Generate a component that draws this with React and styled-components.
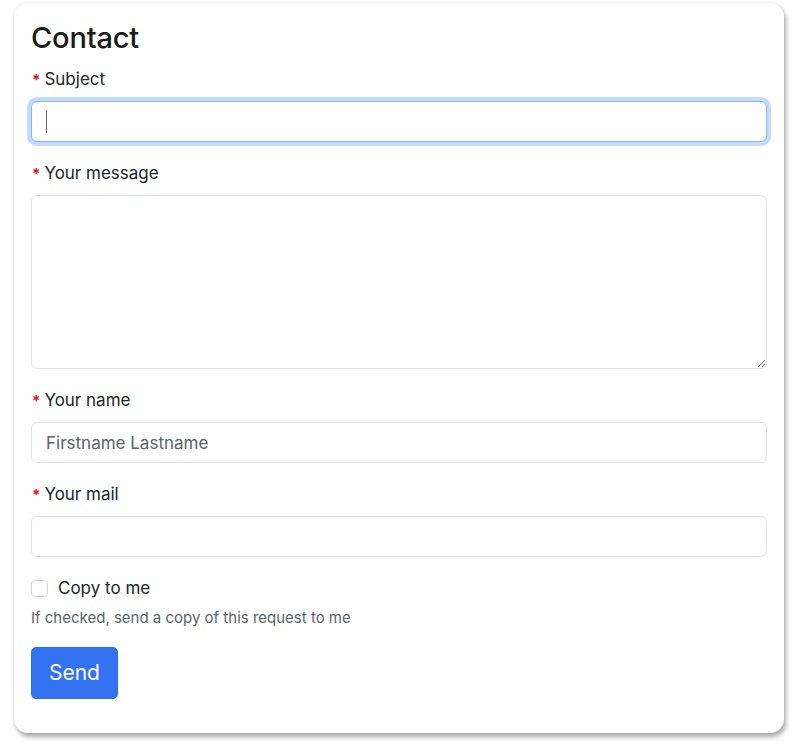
import React from "react";
import styled, { createGlobalStyle } from "styled-components";

const Global = createGlobalStyle`
  html, body { margin: 0; padding: 0; background: #fff; }
  body {
    font-family: Inter, "Helvetica Neue", "Liberation Sans", Arial, sans-serif;
    color: #212529;
    font-size: 17px;
    line-height: 26px;
  }
  * { box-sizing: border-box; }
`;

const Page = styled.div`
  padding: 3px 16px 17px 14px;
`;

const Card = styled.form`
  background: #fff;
  border-radius: 14px;
  padding: 17px 17px 19px 17px;
  box-shadow: 2px 4px 5px rgba(0, 0, 0, 0.33), 0 0 3px rgba(0, 0, 0, 0.08);
`;

const Title = styled.h3`
  margin: 0 0 10px;
  font-size: 29px;
  line-height: 36px;
  font-weight: 500;
  letter-spacing: -0.2px;
  color: #1a1a1a;
`;

const Group = styled.div`
  margin-bottom: 18px;
`;

const Label = styled.label`
  display: block;
  height: 26px;
  margin-bottom: 9px;
  font-size: 17px;
  line-height: 26px;
  color: #212529;
`;

const Star = styled.span`
  color: #e4101d;
  font-weight: 700;
  font-size: 15px;
  line-height: 0;
  margin-right: 4px;
  margin-left: 1px;
`;

const FieldWrap = styled.div`
  position: relative;
`;

const Input = styled.input`
  display: block;
  width: 100%;
  height: 41px;
  padding: 7px 14px;
  font: inherit;
  font-size: 17px;
  line-height: 25px;
  color: #212529;
  background: #fff;
  border: 1px solid ${(p) => (p.$focused ? "#86b7fe" : "#dee2e6")};
  border-radius: 6px;
  outline: none;
  box-shadow: ${(p) => (p.$focused ? "0 0 0 4px rgba(13, 110, 253, 0.25)" : "none")};
  &::placeholder { color: #5c636a; }
`;

const Caret = styled.span`
  position: absolute;
  left: 15px;
  top: 9px;
  width: 1px;
  height: 23px;
  background: #6b6b6b;
`;

const TextArea = styled.textarea`
  display: block;
  width: 100%;
  height: 174px;
  padding: 7px 14px;
  font: inherit;
  font-size: 17px;
  line-height: 25px;
  border: 1px solid #dee2e6;
  border-radius: 6px;
  outline: none;
  resize: vertical;
`;

const CheckRow = styled.div`
  display: flex;
  align-items: center;
  gap: 10px;
  height: 26px;
`;

const Box = styled.input.attrs({ type: "checkbox" })`
  appearance: none;
  -webkit-appearance: none;
  width: 17px;
  height: 17px;
  margin: 0;
  border: 1px solid #d0d4d8;
  border-radius: 4px;
  background: #fff;
  flex: none;
`;

const CheckLabel = styled.label`
  font-size: 17px;
  line-height: 26px;
`;

const Help = styled.div`
  margin-top: 6px;
  font-size: 15px;
  line-height: 22px;
  color: #5c636a;
`;

const Button = styled.button`
  display: inline-block;
  height: 52px;
  padding: 0 17px;
  font: inherit;
  font-size: 21px;
  line-height: 32px;
  color: #fff;
  background: #3373f2;
  border: 1px solid #2f6eea;
  border-radius: 5px;
  cursor: pointer;
`;

const ButtonRow = styled.div`
  margin-bottom: 15px;
`;

const Required = ({ children, htmlFor }) => (
  <Label htmlFor={htmlFor}>
    <Star>*</Star>
    {children}
  </Label>
);

export default function App() {
  return (
    <>
      <Global />
      <Page>
        <Card onSubmit={(e) => e.preventDefault()}>
          <Title>Contact</Title>
          <Group>
            <Required htmlFor="subject">Subject</Required>
            <FieldWrap>
              <Input id="subject" $focused />
              <Caret />
            </FieldWrap>
          </Group>
          <Group>
            <Required htmlFor="message">Your message</Required>
            <TextArea id="message" />
          </Group>
          <Group>
            <Required htmlFor="name">Your name</Required>
            <Input id="name" placeholder="Firstname Lastname" />
          </Group>
          <Group>
            <Required htmlFor="mail">Your mail</Required>
            <Input id="mail" type="email" />
          </Group>
          <Group>
            <CheckRow>
              <Box id="copy" />
              <CheckLabel htmlFor="copy">Copy to me</CheckLabel>
            </CheckRow>
            <Help>If checked, send a copy of this request to me</Help>
          </Group>
          <ButtonRow>
            <Button type="submit">Send</Button>
          </ButtonRow>
        </Card>
      </Page>
    </>
  );
}
